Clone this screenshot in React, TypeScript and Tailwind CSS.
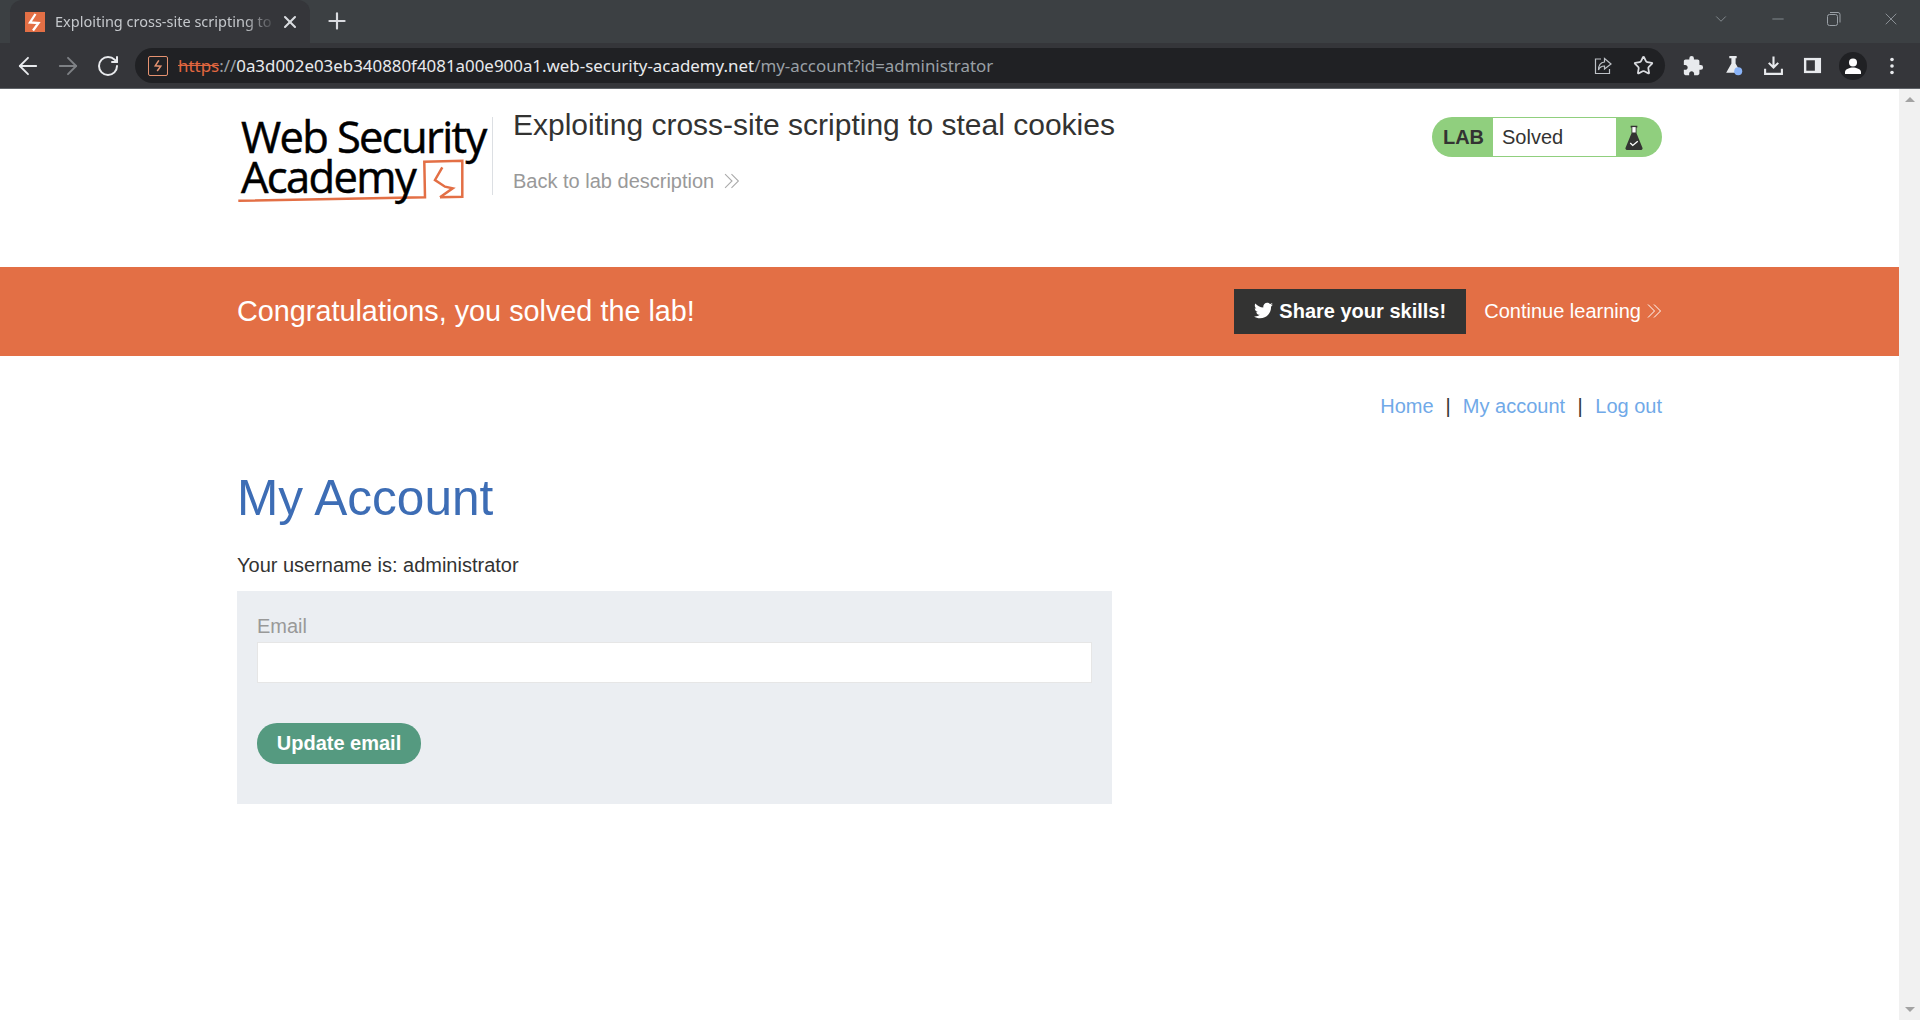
import { ArrowLeft, ArrowRight, ChevronDown, Minus, Plus, RotateCw, Star, X } from 'lucide-react';
import { FaTwitter } from 'react-icons/fa';
import { MdExtension } from 'react-icons/md';

const Bolt = ({ className }: { className?: string }) => (
  <svg viewBox="0 0 20 20" className={className}>
    <path d="M10.500 2 5 10.500l8.500.5L8 18.500" fill="none" stroke="currentColor" strokeWidth="2.300" />
  </svg>
);

const Chevrons = ({ className }: { className?: string }) => (
  <svg viewBox="0 0 15 15" className={className} fill="none" stroke="currentColor" strokeWidth="1">
    <path d="m1 1 6.500 6.500L1 14M7 1l6.500 6.500L7 14" />
  </svg>
);

const Flask = ({ className }: { className?: string }) => (
  <svg viewBox="0 0 22 30" className={className}>
    <path d="M7 1h8v2h-1v7l7 17a2 2 0 0 1-2 3H3a2 2 0 0 1-2-3L8 10V3H7z" fill="#333332" />
    <path d="M9 2.500h4V9H9z" fill="#fff" />
    <path d="m6.500 21.500 3 3 6-5" fill="none" stroke="#fff" strokeWidth="1.600" />
  </svg>
);

const TabStrip = () => (
  <div className="flex h-[43px] items-start bg-[#3c4043] pl-[10px] text-[#e8eaed]">
    <div className="flex h-[43px] w-[300px] items-center rounded-t-xl bg-[#35363a] pl-[15px]">
      <div className="flex h-[20px] w-[20px] items-center justify-center bg-[#e36f45] text-white">
        <Bolt className="h-[20px] w-[20px]" />
      </div>
      <span className="ml-[10px] w-[222px] overflow-hidden whitespace-nowrap font-['Noto_Sans',sans-serif] text-[14.500px] text-[#c5c8cc] [mask-image:linear-gradient(to_right,black_85%,transparent)]">
        Exploiting cross-site scripting to
      </span>
      <X className="ml-[3px] h-[20px] w-[20px] text-[#dadce0]" strokeWidth={2.5} />
    </div>
    <Plus className="ml-[14px] mt-[8px] h-[26px] w-[26px] text-[#dadce0]" strokeWidth={2} />
    <div className="ml-auto mr-[19px] mt-[9px] flex h-[20px] items-center gap-[39px] text-[#9aa0a6]">
      <ChevronDown className="h-[18px] w-[18px]" strokeWidth={1} />
      <Minus className="h-[18px] w-[18px]" strokeWidth={1} />
      <svg viewBox="0 0 16 16" className="h-[16px] w-[16px]" fill="none" stroke="currentColor">
        <rect x="1.500" y="3.500" width="10" height="11" rx="2" />
        <path d="M4 1.500h8a2 2 0 0 1 2 2v8" />
      </svg>
      <X className="h-[20px] w-[20px]" strokeWidth={1} />
    </div>
  </div>
);

const Toolbar = () => (
  <div className="flex h-[46px] items-center border-b border-[#5f6368] bg-[#35363a] pl-[14px] text-[#e8eaed]">
    <ArrowLeft className="h-[28px] w-[28px]" strokeWidth={1.6} />
    <ArrowRight className="ml-[12px] h-[28px] w-[28px] text-[#7e8185]" strokeWidth={1.6} />
    <RotateCw className="ml-[14px] h-[24px] w-[24px]" strokeWidth={2} />
    <div className="ml-[15px] flex h-[35px] w-[1530px] items-center rounded-full bg-[#202124] pl-[13px] pr-[11px]">
      <div className="flex h-[20px] w-[20px] items-center justify-center rounded-[2px] border-[1.500px] border-[#e59270] text-[#e59270]">
        <Bolt className="h-[13px] w-[13px]" />
      </div>
      <span className="ml-[10px] whitespace-nowrap font-['Noto_Sans',sans-serif] text-[16.900px] text-[#e8eaed]">
        <span className="text-[#e2673f] line-through">https</span>
        <span className="text-[#9aa0a6]">://</span>
        0a3d002e03eb340880f4081a00e900a1.web-security-academy.net
        <span className="text-[#9aa0a6]">/my-account?id=administrator</span>
      </span>
      <svg viewBox="0 0 20 20" className="ml-auto h-[20px] w-[20px]" fill="none" stroke="#bdc1c6" strokeWidth="1.200">
        <path d="M8 3H2.500v14.500h14V13" />
        <path d="M11.500 2.500 18 8l-6.500 5V10C8.500 10 6.500 11.500 5.500 14c0-5 2-7.500 6-8z" />
      </svg>
      <Star className="ml-[20px] h-[21px] w-[21px] text-[#dadce0]" strokeWidth={2} />
    </div>
    <MdExtension className="ml-[17px] h-[22px] w-[22px]" />
    <svg viewBox="0 0 20 20" className="ml-[19px] h-[21px] w-[21px]">
      <path d="M6 1h7v2h-1v5l5 9H3l5-9V3H6z" fill="#e8eaed" />
      <circle cx="14.500" cy="15.500" r="3.800" fill="#8ab4f8" />
    </svg>
    <svg viewBox="0 0 20 20" className="ml-[19px] h-[21px] w-[21px]" fill="none" stroke="#e8eaed" strokeWidth="2">
      <path d="M10 1.500v10M5.500 7.500 10 12l4.500-4.500M2 13v5h16v-5" />
    </svg>
    <svg viewBox="0 0 20 20" className="ml-[19px] h-[19px] w-[19px]">
      <path d="M1 2h18v16H1z" fill="#e8eaed" />
      <path d="M3.500 4.500h9v11h-9z" fill="#35363a" />
    </svg>
    <div className="ml-[17px] flex h-[28px] w-[28px] items-center justify-center rounded-full bg-[#202124]">
      <svg viewBox="0 0 20 20" className="h-[20px] w-[20px]" fill="#fff">
        <circle cx="10" cy="6.500" r="4" />
        <path d="M2 18v-2c0-3 5-4.500 8-4.500s8 1.500 8 4.500v2z" />
      </svg>
    </div>
    <svg viewBox="0 0 4 18" className="ml-[23px] h-[18px] w-[4px]" fill="#e8eaed">
      <circle cx="2" cy="2.500" r="1.800" />
      <circle cx="2" cy="9" r="1.800" />
      <circle cx="2" cy="15.500" r="1.800" />
    </svg>
  </div>
);

const Logo = () => (
  <div className="relative h-[88px] w-[255px] shrink-0 font-['Open_Sans',sans-serif] text-[43.500px] font-medium leading-[40px] tracking-[-0.038em] text-black [-webkit-text-stroke:0.5px_black]">
    <svg viewBox="0 0 255 88" className="absolute left-0 top-0 h-[88px] w-[255px]" fill="none" stroke="#e36f45" strokeWidth="2.500">
      <path d="M1.300 83.700 188 80.300 187.300 44.700 225.300 43.700V79.700L203 80.300" />
      <path d="M205.300 50.300 198 63l10 6.700 7.700 1.600L203 80.300" />
    </svg>
    <div className="relative whitespace-nowrap pl-[4px]">Web Security</div>
    <div className="relative whitespace-nowrap pl-[4px]">Academy</div>
  </div>
);

const LabHeader = () => (
  <header className="flex h-[178px] pt-[28px]">
    <Logo />
    <div className="h-[78px] border-l border-[#dcdfe3]" />
    <div className="-mt-[10px] ml-[20px] text-[#333332]">
      <h2 className="whitespace-nowrap text-[30px] leading-[36px]">Exploiting cross-site scripting to steal cookies</h2>
      <a className="mt-[25px] flex items-center text-[20px] leading-[26px] text-[#999]">
        Back to lab description
        <Chevrons className="ml-[10px] h-[16px] w-[16px] text-[#aaa]" />
      </a>
    </div>
    <div className="ml-auto flex h-[40px] w-[230px] items-stretch rounded-[20px] bg-[#90cf7e]">
      <span className="flex w-[61px] items-center justify-center pl-[2px] text-[20px] font-bold text-[#333332]">LAB</span>
      <span className="my-[1px] flex w-[123px] items-center bg-white pl-[9px] text-[20px] text-[#333332]">Solved</span>
      <span className="flex flex-1 items-center justify-center pr-[10px]">
        <Flask className="h-[25px] w-[20px]" />
      </span>
    </div>
  </header>
);

const Banner = () => (
  <section className="bg-[#e36f45] text-white">
    <div className="mx-auto flex h-[89px] w-[1425px] items-center">
      <h4 className="whitespace-nowrap text-[28.800px]">Congratulations, you solved the lab!</h4>
      <a className="ml-auto flex h-[45px] w-[232px] items-center justify-center bg-[#333332] pb-[2px] text-[20px] font-bold">
        <FaTwitter className="mr-[6px] h-[19px] w-[19px]" />
        Share your skills!
      </a>
      <a className="ml-[18px] flex items-center whitespace-nowrap pb-[2px] text-[20px]">
        Continue learning
        <Chevrons className="ml-[6px] h-[16px] w-[15px]" />
      </a>
    </div>
  </section>
);

const NavLinks = () => (
  <nav className="flex justify-end pt-[37px] text-[20px] leading-[26px] text-[#70a9e8]">
    <a>Home</a>
    <span className="mx-[12px] text-[#333332]">|</span>
    <a>My account</a>
    <span className="mx-[12.500px] text-[#333332]">|</span>
    <a>Log out</a>
  </nav>
);

const AccountForm = () => (
  <form className="mt-[14px] flex h-[213px] w-[875px] flex-col items-start bg-[#ebeef2] px-[20px] pt-[23px]">
    <label className="text-[20px] leading-[24px] text-[#999]">Email</label>
    <input className="mt-[4px] h-[41px] w-full border border-[#e6e6e6] bg-white" />
    <button type="button" className="mt-[40px] h-[41px] w-[164px] rounded-[20px] bg-[#559a80] pb-[2px] text-[20px] font-bold text-white">
      Update email
    </button>
  </form>
);

export default function App() {
  return (
    <div className="flex h-[1020px] flex-col overflow-hidden bg-white font-['Liberation_Sans',Arial,sans-serif] text-[#333332]">
      <TabStrip />
      <Toolbar />
      <div className="flex flex-1">
        <main className="flex-1">
          <div className="mx-auto w-[1425px]">
            <LabHeader />
          </div>
          <Banner />
          <div className="mx-auto w-[1425px]">
            <NavLinks />
            <h1 className="mt-[49px] text-[49.600px] leading-[60px] text-[#3d6db5]">My Account</h1>
            <p className="mt-[25px] text-[20px] leading-[24px]">Your username is: administrator</p>
            <AccountForm />
          </div>
        </main>
        <div className="flex w-[21px] flex-col items-center justify-between bg-[#f1f1f1] py-[8px]">
          <div className="h-0 w-0 border-x-[5px] border-b-[5px] border-x-transparent border-b-[#a3a3a3]" />
          <div className="h-0 w-0 border-x-[5px] border-t-[5px] border-x-transparent border-t-[#a3a3a3]" />
        </div>
      </div>
    </div>
  );
}
